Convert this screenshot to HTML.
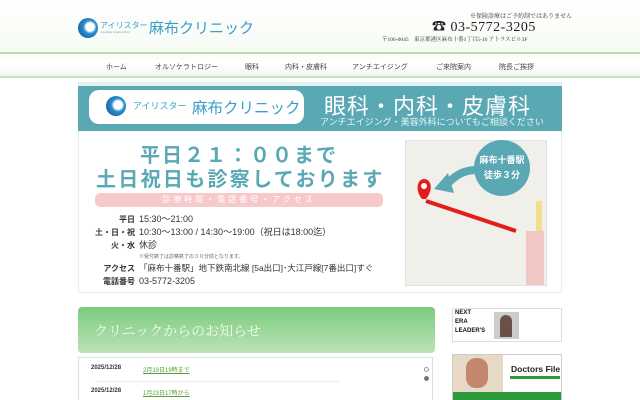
<!DOCTYPE html>
<html><head><meta charset="utf-8"><style>
*{margin:0;padding:0;box-sizing:border-box}
body{width:640px;height:400px;overflow:hidden;background:#fff;font-family:"Liberation Sans","Noto Sans CJK JP",sans-serif;position:relative}
.abs{position:absolute}
.hdr{left:0;top:0;width:640px;height:52px;background:linear-gradient(#fff,#f6fbf4)}
.nav{left:0;top:52px;width:640px;height:26px;background:linear-gradient(#f8fcf6,#fff 40%,#f2f8f0);border-top:2px solid #b9dfb2;border-bottom:2px solid #c4e6bd;font-size:7px;color:#444}
.nav span{position:absolute;top:8px}
.ser{font-family:"Liberation Serif","Noto Serif CJK SC",serif}
.teal{left:78px;top:86px;width:484px;height:45px;background:#5aa8b4}
.lgbox{left:89px;top:90px;width:215px;height:34px;background:#fff;border-radius:10px}
.body{left:78px;top:131px;width:484px;height:162px;background:#fff;border:1px solid #e6eeee;border-top:none}
.tt{color:#5aa8b4;font-weight:bold;font-size:20px;letter-spacing:2px}
.hrs{font-size:9px;color:#333}
.hrs b{display:inline-block;width:42px;text-align:right;margin-right:4px;font-size:8px}
</style></head><body>
<div class="abs hdr"></div>
<div class="abs" style="left:78px;top:18px;width:20px;height:20px;border-radius:50%;background:radial-gradient(circle at 60% 45%,#fff 0 25%,#2a8fd0 40%,#1a5fa0 80%)"></div>
<div class="abs" style="left:100px;top:20px;font-size:8px;color:#3a9fc8">アイリスター</div>
<div class="abs" style="left:101px;top:30px;font-size:3px;color:#6ab">Eyelistar Azabu Clinic</div>
<div class="abs" style="left:149px;top:17px;font-size:15px;color:#3a9fc8">麻布クリニック</div>
<div class="abs ser" style="left:470px;top:11px;font-size:6px;color:#333">※保険診療はご予約制ではありません</div>
<div class="abs ser" style="left:432px;top:16px;font-size:14px;color:#222;letter-spacing:.5px">☎ 03-5772-3205</div>
<div class="abs ser" style="left:382px;top:35px;font-size:5.5px;color:#333">〒106-0045　東京都港区麻布十番1丁目5-10 アトラスビル3F</div>
<div class="abs nav">
<span style="left:106px">ホーム</span><span style="left:155px">オルソケラトロジー</span><span style="left:245px">眼科</span><span style="left:285px">内科・皮膚科</span><span style="left:352px">アンチエイジング</span><span style="left:436px">ご来院案内</span><span style="left:499px">院長ご挨拶</span>
</div>
<div class="abs" style="left:78px;top:82px;width:484px;height:4px;background:#e2f3ef"></div>
<div class="abs teal"></div>
<div class="abs lgbox"></div>
<div class="abs" style="left:106px;top:96px;width:20px;height:20px;border-radius:50%;background:radial-gradient(circle at 60% 45%,#fff 0 25%,#2a8fd0 40%,#1a5fa0 80%)"></div>
<div class="abs" style="left:133px;top:99px;font-size:9px;color:#3a9fc8">アイリスター</div>
<div class="abs" style="left:192px;top:96px;font-size:15.5px;color:#3a9fc8">麻布クリニック</div>
<div class="abs" style="left:324px;top:89px;font-size:22px;color:#fff;letter-spacing:1px">眼科・内科・皮膚科</div>
<div class="abs" style="left:320px;top:115px;font-size:9px;color:#e8f6f8">アンチエイジング・美容外科についてもご相談ください</div>
<div class="abs body"></div>
<div class="abs tt" style="left:140px;top:139px">平日２１：００まで</div>
<div class="abs tt" style="left:96px;top:163px;letter-spacing:2.3px">土日祝日も診察しております</div>
<div class="abs" style="left:95px;top:193px;width:288px;height:14px;background:#f7c9ca;border-radius:5px;color:#fff;font-size:8px;text-align:center;line-height:14px;letter-spacing:3px">診療時間・電話番号・アクセス</div>
<div class="abs hrs" style="left:93px;top:213px;line-height:12px">
<div><b>平日</b>15:30～21:00</div>
<div><b>土・日・祝</b>10:30～13:00 / 14:30～19:00（祝日は18:00迄）</div>
<div><b>火・水</b>休診</div>
<div style="font-size:5px;margin-left:46px;line-height:10px;color:#666">※受付終了は診察終了の３０分前となります。</div>
<div><b>アクセス</b><span style="font-size:8.5px">「麻布十番駅」地下鉄南北線 [5a出口]･大江戸線[7番出口]すぐ</span></div>
<div><b>電話番号</b>03-5772-3205</div>
</div>
<div class="abs" style="left:405px;top:140px;width:142px;height:146px;background:#f1efea;border:1px solid #e2e2e2;overflow:hidden">
<div class="abs" style="left:130px;top:60px;width:6px;height:86px;background:#f5d24a;opacity:.6"></div>
<div class="abs" style="left:120px;top:90px;width:18px;height:56px;background:#f3c6c6"></div>
<svg class="abs" style="left:0;top:0" width="142" height="146"><path d="M20 60 L110 90" stroke="#e31c1c" stroke-width="4"/><path d="M40 45 Q55 25 80 30" stroke="#5aa8b4" stroke-width="8" fill="none"/><path d="M28 48 L42 32 L48 52 Z" fill="#5aa8b4"/><path d="M16 58 C8 48 12 38 18 38 C25 38 28 48 20 58 Z" fill="#e31c1c"/><circle cx="18" cy="45" r="3" fill="#fff"/></svg>
</div>
<div class="abs" style="left:474px;top:140px;width:56px;height:56px;border-radius:50%;background:#5aa8b4;color:#fff;font-size:9px;font-weight:bold;text-align:center;padding-top:13px;line-height:15px">麻布十番駅<br>徒歩３分</div>
<div class="abs" style="left:78px;top:307px;width:357px;height:46px;border-radius:4px;background:linear-gradient(#7ecb7e,#b9e3b5)"></div>
<div class="abs ser" style="left:94px;top:321px;font-size:14px;color:#f3fbf0">クリニックからのお知らせ</div>
<div class="abs" style="left:78px;top:357px;width:355px;height:43px;border:1px solid #ddd;border-bottom:none"></div>
<div class="abs" style="left:91px;top:365px;font-size:6px;font-weight:bold;color:#333">2025/12/28</div>
<div class="abs" style="left:143px;top:365px;font-size:6px;color:#5a9d3a;text-decoration:underline">2月19日19時まで</div>
<div class="abs" style="left:95px;top:381px;width:245px;height:1px;background:#eee"></div>
<div class="abs" style="left:91px;top:388px;font-size:6px;font-weight:bold;color:#333">2025/12/28</div>
<div class="abs" style="left:143px;top:388px;font-size:6px;color:#5a9d3a;text-decoration:underline">1月23日17時から</div>
<div class="abs" style="left:424px;top:367px;width:5px;height:5px;border-radius:50%;border:1px solid #999"></div>
<div class="abs" style="left:424px;top:376px;width:5px;height:5px;border-radius:50%;background:#777"></div>
<div class="abs" style="left:452px;top:308px;width:110px;height:34px;background:#fff;border:1px solid #ddd"></div>
<div class="abs" style="left:455px;top:309px;font-size:6px;font-weight:bold;line-height:9px;color:#111">NEXT<br>ERA<br>LEADER'S</div>
<div class="abs" style="left:494px;top:312px;width:25px;height:27px;background:#ccc"></div>
<div class="abs" style="left:500px;top:315px;width:12px;height:22px;background:#6a5048;border-radius:6px 6px 0 0"></div>
<div class="abs" style="left:452px;top:354px;width:110px;height:46px;background:#fff;border:1px solid #ccc"></div>
<div class="abs" style="left:453px;top:355px;width:50px;height:37px;background:#e8d8c8"></div>
<div class="abs" style="left:466px;top:358px;width:22px;height:30px;border-radius:10px;background:#c2876c"></div>
<div class="abs" style="left:511px;top:364px;font-size:8.5px;font-weight:bold;color:#222">Doctors File</div>
<div class="abs" style="left:510px;top:376px;width:50px;height:3px;background:#2a9a3a"></div>
<div class="abs" style="left:453px;top:392px;width:108px;height:8px;background:#2a9a3a"></div>
</body></html>
